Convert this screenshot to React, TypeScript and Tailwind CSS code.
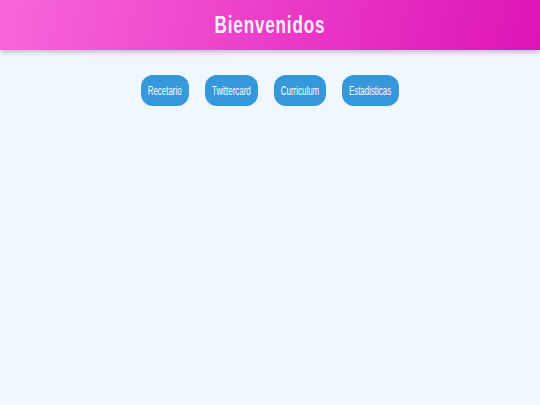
const links = [
  { label: 'Recetario', w: 'w-[48px]' },
  { label: 'Twittercard', w: 'w-[53px]' },
  { label: 'Curriculum', w: 'w-[52px]' },
  { label: 'Estadisticas', w: 'w-[57px]' },
];

export default function App() {
  return (
    <div className="min-h-screen bg-[#f0f8ff]" style={{ fontFamily: '"Liberation Sans", Arial, sans-serif' }}>
      <header className="h-[50px] flex items-center justify-center bg-[linear-gradient(100deg,#f866da,#dd14b6)] shadow-[0_2px_5px_rgba(0,0,0,0.25)]">
        <h1 className="text-[24px] font-bold text-[#fff0fb] tracking-[1.2px] leading-none scale-x-[0.71] whitespace-nowrap">
          Bienvenidos
        </h1>
      </header>
      <nav className="flex justify-center gap-4 mt-[25px]">
        {links.map((l) => (
          <button
            key={l.label}
            className={`${l.w} h-[31px] rounded-xl bg-[#3498db] text-white text-[12px] flex items-center justify-center`}
          >
            <span className="inline-block scale-x-[0.66] whitespace-nowrap">{l.label}</span>
          </button>
        ))}
      </nav>
    </div>
  );
}
